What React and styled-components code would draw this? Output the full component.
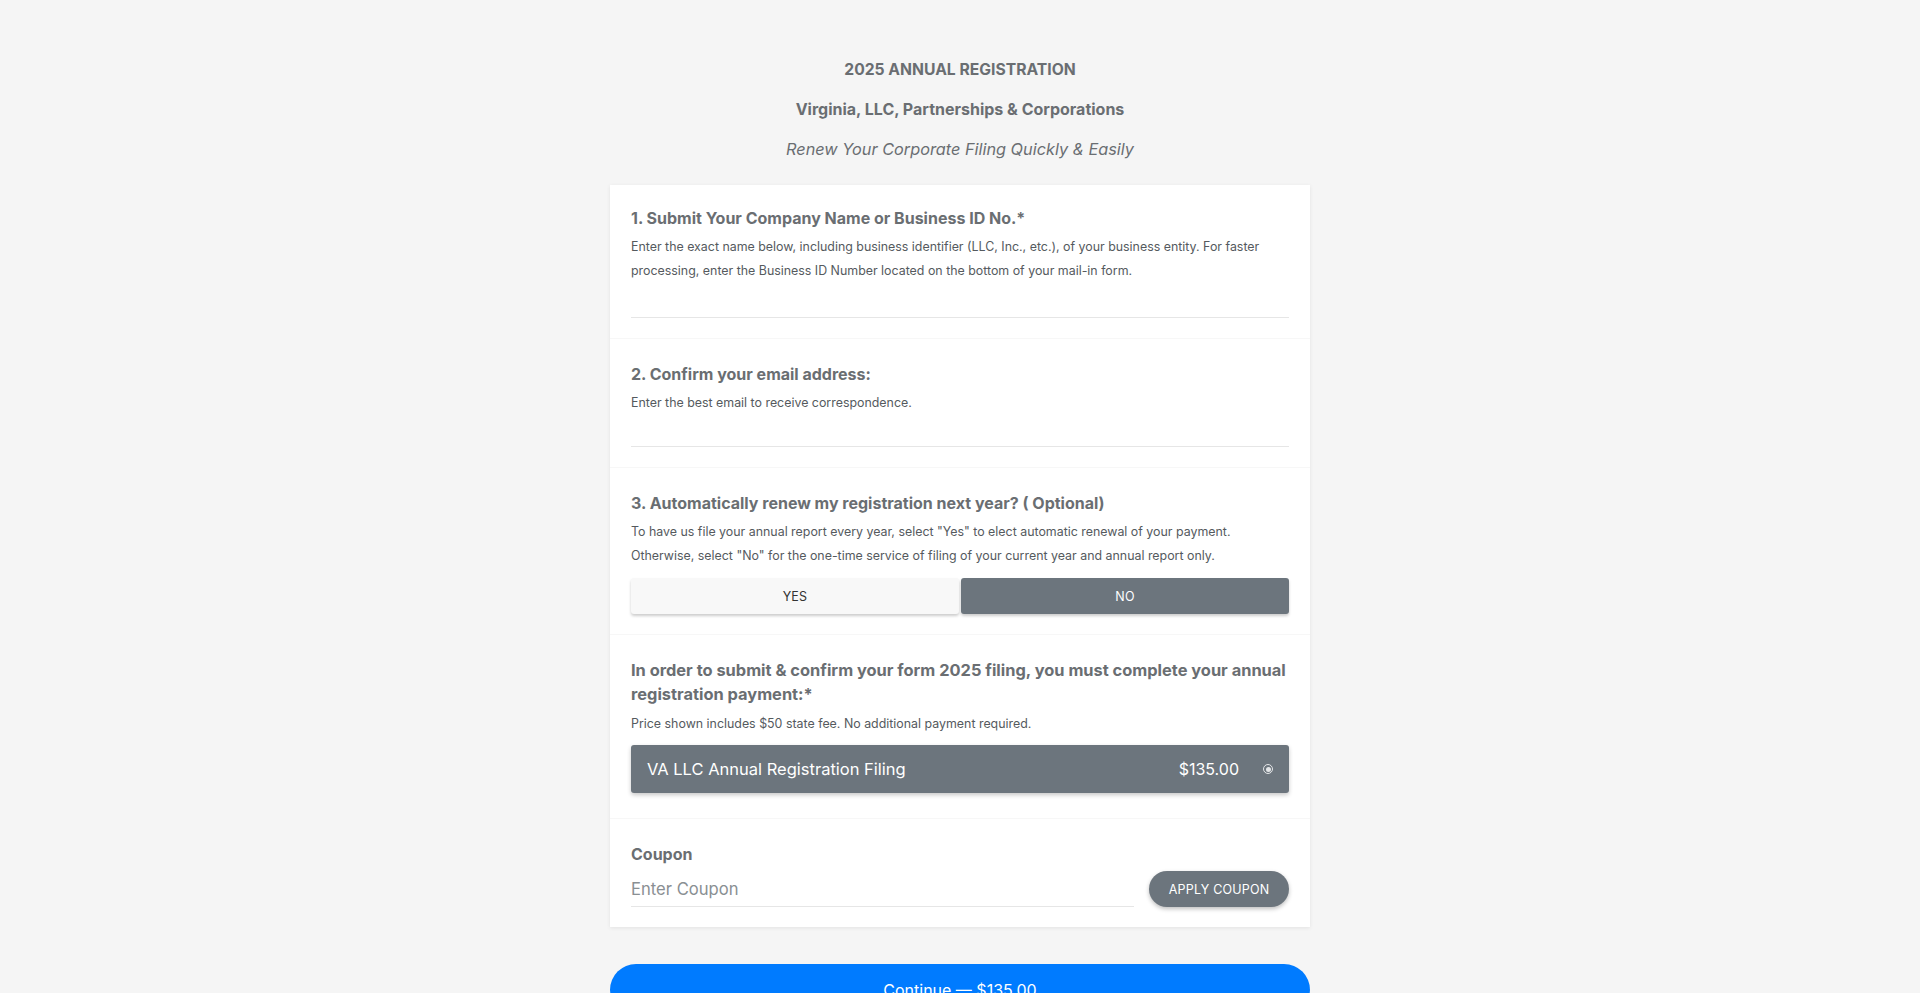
import React, { useState } from 'react'
import styled, { createGlobalStyle } from 'styled-components'

const GlobalStyle = createGlobalStyle`
  * { box-sizing: border-box; }
  body {
    margin: 0;
    background: #f5f5f5;
    font-family: Inter, "Open Sans", Arial, sans-serif;
    color: #6c757d;
  }
`

const Page = styled.div`
  display: flex;
  flex-direction: column;
  align-items: center;
  padding-top: 58px;
`

const Title = styled.h1`
  margin: 0;
  font-size: 15.7px;
  font-weight: 700;
  color: #6a6e72;
  line-height: 24px;
`

const SubTitle = styled.h2`
  margin: 15px 0 0;
  font-size: 16px;
  font-weight: 700;
  color: #6a6e72;
  line-height: 24px;
`

const Tagline = styled.p`
  margin: 16px 0 0;
  font-size: 16.3px;
  font-style: italic;
  color: #6a6e72;
  line-height: 24px;
`

const Card = styled.div`
  width: 700px;
  margin-top: 24px;
  background: #fff;
  box-shadow: 0 1px 4px rgba(0, 0, 0, 0.08);
`

const Section = styled.div`
  padding: ${p => p.$top || 24}px 21px ${p => p.$bottom || 20}px;
  border-bottom: ${p => (p.$last ? 'none' : '1px solid #f7f7f7')};
`

const Heading = styled.h3`
  margin: 0;
  font-size: ${p => p.$size || 16}px;
  font-weight: 700;
  line-height: ${p => p.$lh || 22}px;
  color: #6a6e72;
`

const Desc = styled.p`
  margin: 6px 0 0;
  font-size: 12.4px;
  line-height: 24px;
  color: #555a5e;
`

const LineInput = styled.input`
  display: block;
  width: 100%;
  height: ${p => p.$h || 35}px;
  border: none;
  border-bottom: 1px solid #e6e6e6;
  background: transparent;
  font-family: inherit;
  font-size: 16.6px;
  color: #495057;
  outline: none;
  padding: 0;
  &::placeholder { color: #8a8f93; }
`

const Toggle = styled.div`
  display: grid;
  grid-template-columns: 1fr 1fr;
  gap: 2px;
  margin-top: 10px;
`

const ToggleButton = styled.button`
  height: 36px;
  border: none;
  border-radius: 3px;
  font-family: inherit;
  font-size: 12.5px;
  letter-spacing: 0.2px;
  cursor: pointer;
  background: ${p => (p.$active ? '#6c757d' : '#f8f8f8')};
  color: ${p => (p.$active ? '#fff' : '#333')};
  box-shadow: 0 2px 3px rgba(0, 0, 0, 0.2);
`

const PriceBox = styled.div`
  display: flex;
  align-items: center;
  height: 48px;
  margin-top: 9px;
  padding: 0 16px;
  background: #6c757d;
  border-radius: 3px;
  color: #fff;
  box-shadow: 0 2px 4px rgba(0, 0, 0, 0.22);
`

const PriceName = styled.span`
  flex: 1;
  font-size: 16.5px;
`

const PriceAmount = styled.span`
  font-size: 16px;
  margin-right: 24px;
`

const Radio = styled.span`
  width: 10px;
  height: 10px;
  border-radius: 50%;
  border: 1px solid #e3e5e7;
  display: flex;
  align-items: center;
  justify-content: center;
  &::after {
    content: '';
    width: 5px;
    height: 5px;
    border-radius: 50%;
    background: #e3e5e7;
  }
`

const CouponRow = styled.div`
  display: flex;
  align-items: center;
  gap: 15px;
  margin-top: 6px;
`

const CouponInput = styled(LineInput)`
  flex: 1;
  width: auto;
`

const ApplyButton = styled.button`
  width: 140px;
  height: 36px;
  border: none;
  border-radius: 18px;
  background: #6c757d;
  color: #fff;
  font-family: inherit;
  font-size: 12.5px;
  letter-spacing: 0.2px;
  cursor: pointer;
  box-shadow: 0 2px 4px rgba(0, 0, 0, 0.25);
`

const ContinueButton = styled.button`
  width: 700px;
  height: 52px;
  margin: 37px 0 40px;
  border: none;
  border-radius: 26px;
  background: #007bff;
  color: #fff;
  font-family: inherit;
  font-size: 16px;
  cursor: pointer;
`

export default function App() {
  const [renew, setRenew] = useState(false)

  return (
    <Page>
      <GlobalStyle />
      <Title>2025 ANNUAL REGISTRATION</Title>
      <SubTitle>Virginia, LLC, Partnerships &amp; Corporations</SubTitle>
      <Tagline>Renew Your Corporate Filing Quickly &amp; Easily</Tagline>

      <Card>
        <Section $top={22}>
          <Heading>1. Submit Your Company Name or Business ID No.*</Heading>
          <Desc>
            Enter the exact name below, including business identifier (LLC, Inc., etc.), of your business entity. For faster
            processing, enter the Business ID Number located on the bottom of your mail-in form.
          </Desc>
          <LineInput type="text" />
        </Section>

        <Section>
          <Heading>2. Confirm your email address:</Heading>
          <Desc>Enter the best email to receive correspondence.</Desc>
          <LineInput type="email" $h={32} />
        </Section>

        <Section>
          <Heading>3. Automatically renew my registration next year? ( Optional)</Heading>
          <Desc>
            To have us file your annual report every year, select "Yes" to elect automatic renewal of your payment.
            <br />
            Otherwise, select "No" for the one-time service of filing of your current year and annual report only.
          </Desc>
          <Toggle>
            <ToggleButton $active={renew} onClick={() => setRenew(true)}>YES</ToggleButton>
            <ToggleButton $active={!renew} onClick={() => setRenew(false)}>NO</ToggleButton>
          </Toggle>
        </Section>

        <Section $top={23} $bottom={25}>
          <Heading $size={16.4} $lh={24}>
            In order to submit &amp; confirm your form 2025 filing, you must complete your annual registration payment:*
          </Heading>
          <Desc>Price shown includes $50 state fee. No additional payment required.</Desc>
          <PriceBox>
            <PriceName>VA LLC Annual Registration Filing</PriceName>
            <PriceAmount>$135.00</PriceAmount>
            <Radio />
          </PriceBox>
        </Section>

        <Section $last>
          <Heading>Coupon</Heading>
          <CouponRow>
            <CouponInput type="text" placeholder="Enter Coupon" />
            <ApplyButton>APPLY COUPON</ApplyButton>
          </CouponRow>
        </Section>
      </Card>

      <ContinueButton>Continue — $135.00</ContinueButton>
    </Page>
  )
}
